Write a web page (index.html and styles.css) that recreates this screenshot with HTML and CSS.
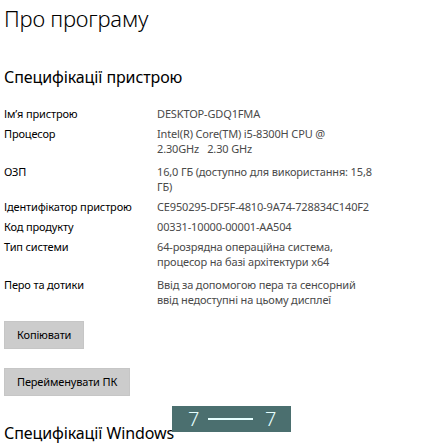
FILE: index.html
```
<!DOCTYPE html>
<html lang="uk">
<head>
<meta charset="utf-8">
<link rel="stylesheet" href="styles.css">
</head>
<body>
<div class="page">
  <h1 class="title">Про програму</h1>
  <h2 class="section">Специфікації пристрою</h2>
  <div class="specs">
    <div class="label">Ім’я пристрою</div><div class="value">DESKTOP-GDQ1FMA</div>
    <div class="label multi">Процесор</div><div class="value multi">Intel(R) Core(TM) i5-8300H CPU @<br>2.30GHz&nbsp;&nbsp; 2.30 GHz</div>
    <div class="label">ОЗП</div><div class="value">16,0 ГБ (доступно для використання: 15,8<br>ГБ)</div>
    <div class="label">Ідентифікатор пристрою</div><div class="value">CE950295-DF5F-4810-9A74-728834C140F2</div>
    <div class="label">Код продукту</div><div class="value">00331-10000-00001-AA504</div>
    <div class="label multi">Тип системи</div><div class="value multi">64-розрядна операційна система,<br>процесор на базі архітектури x64</div>
    <div class="label multi">Перо та дотики</div><div class="value multi">Ввід за допомогою пера та сенсорний<br>ввід недоступні на цьому дисплеї</div>
  </div>
  <div class="btn-row first"><button class="btn">Копіювати</button></div>
  <div class="btn-row second"><button class="btn">Перейменувати ПК</button></div>
  <h2 class="section section-win">Специфікації Windows</h2>
</div>
<div class="overlay"><span class="seven">7</span><span class="dash"></span><span class="seven">7</span></div>
</body>
</html>
```
FILE: styles.css
```
html, body { margin: 0; padding: 0; background: #fff; }
body { font-family: "Noto Sans", "Open Sans", sans-serif; color: #000; position: relative; width: 433px; height: 446px; overflow: hidden; }
.page { padding-left: 4px; }
.title { margin: 0; padding-top: 3px; font-size: 22px; font-weight: 300; line-height: 30px; letter-spacing: -0.2px; }
.section { margin: 0; margin-top: 33px; font-size: 16px; font-weight: 400; line-height: 22px; letter-spacing: -0.1px; }
.specs { display: grid; grid-template-columns: 153px 260px; row-gap: 5px; margin-top: 18px; font-size: 11px; line-height: 15px; }
.label { color: #000; letter-spacing: -0.15px; white-space: nowrap; }
.value { color: #4a4a4a; letter-spacing: -0.15px; white-space: nowrap; }
.multi { padding-bottom: 3px; }
.btn-row.first { margin-top: 11px; }
.btn-row.second { margin-top: 19px; }
.btn { display: block; font-family: inherit; font-size: 11px; line-height: 14px; padding: 6px 12px; background: #cccccc; border: 1px solid #c6c6c6; color: #000; border-radius: 0; letter-spacing: -0.15px; }
.section-win { margin-top: 26px; }
.overlay { position: absolute; left: 172px; top: 406px; width: 119px; height: 26px; background: #4b6f6f; display: flex; align-items: center; padding: 0 0 0 16px; box-sizing: border-box; color: #e6ffff; }
.seven { font-size: 20px; line-height: 26px; font-weight: 300; width: 10px; }
.dash { width: 45px; height: 2px; background: #e6ffff; margin: 0 12px 0 10px; }
```
